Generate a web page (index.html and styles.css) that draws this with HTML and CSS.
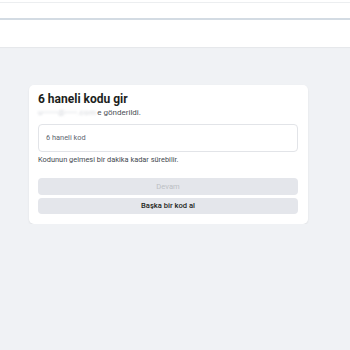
FILE: index.html
```html
<!DOCTYPE html>
<html lang="tr">
<head>
    <meta charset="UTF-8">
    <meta name="viewport" content="width=device-width, initial-scale=1.0">
    <title>Kod gir</title>
    <link rel="stylesheet" href="styles.css">
</head>
<body>
    <!-- üst bar -->
    <div class="topbar"></div>
    <div class="subbar"></div>

    <div class="main">
        <div class="card">
            <h2 class="title">6 haneli kodu gir</h2>
            <p class="sub"><span class="masked">u•••••@••••.com</span>e gönderildi.</p>
            <div class="field">6 haneli kod</div>
            <p class="hint">Kodunun gelmesi bir dakika kadar sürebilir.</p>
            <div class="btn disabled">Devam</div>
            <div class="btn">Başka bir kod al</div>
        </div>
    </div>
</body>
</html>
```
FILE: styles.css
```css
*{
    margin: 0;
    padding: 0;
    box-sizing: border-box;
}
body{
    font-family: Roboto, "Liberation Sans", Arial, sans-serif;
    background-color: #f0f2f5;
    color: #1c1e21;
}
.topbar{
    height: 20px;
    background-color: #fff;
    /* ince gri çizgi y=2 */
    box-shadow: inset 0 2px 0 #fff, inset 0 3px 0 #eceef0;
    border-bottom: 2px solid #d3dbe3;
}
.subbar{
    height: 27px;
    background-color: #fff;
    box-shadow: 0 1px 1px rgba(0,0,0,.04);
}
.main{
    padding: 38px 42px 0 29px;
}
.card{
    background-color: #fff;
    border-radius: 5px;
    box-shadow: 0 1px 2px rgba(0,0,0,.08);
    padding: 7px 10px 10px 9px;
}
.title{
    font-size: 12px;
    font-weight: bold;
    line-height: 15px;
}
.sub{
    font-size: 8px;
    color: #4b4f56;
    line-height: 11px;
}
.masked{
    color: #d2d5da;
    filter: blur(0.8px);
    margin-right: 1px;
    letter-spacing: 0.3px;
}
.field{
    margin-top: 6px;
    height: 28px;
    border: 1px solid #e2e4e8;
    border-radius: 4px;
    padding: 0 7px;
    font-size: 7.4px;
    line-height: 26px;
    color: #606770;
}
.hint{
    margin-top: 2px;
    font-size: 7.4px;
    line-height: 12px;
    color: #444950;
}
.btn{
    height: 16px;
    border-radius: 4px;
    background-color: #e4e6eb;
    font-size: 7.6px;
    font-weight: 500;
    line-height: 16px;
    text-align: center;
    margin-top: 3px;
    color: #1c1e21;
}
.disabled{
    height: 17px;
    line-height: 17px;
    margin-top: 12px;
    color: #bcc0c4;
    font-weight: normal;
    font-size: 7.6px;
}
```
